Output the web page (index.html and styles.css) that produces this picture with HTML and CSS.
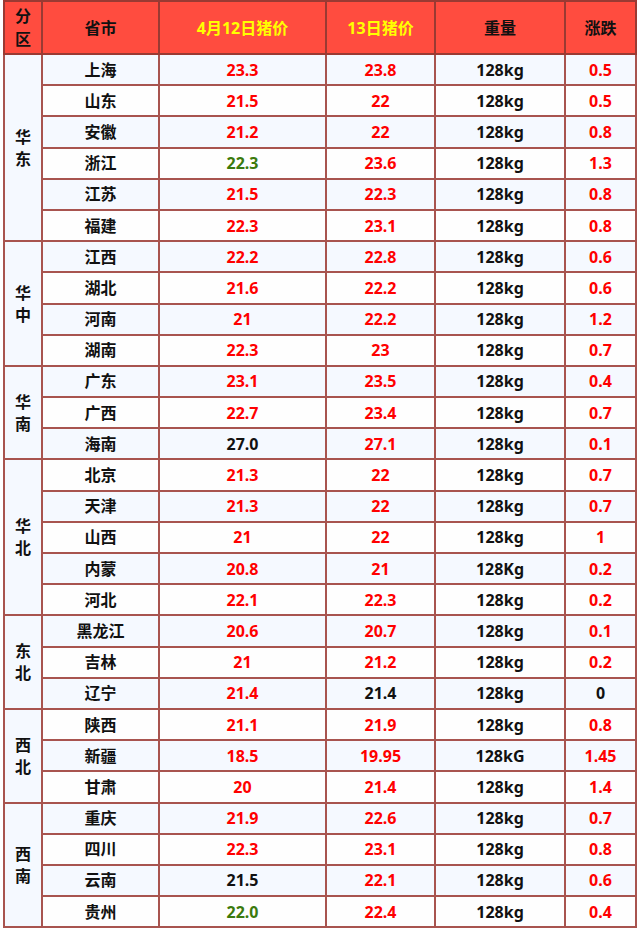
FILE: index.html
```html
<!DOCTYPE html>
<html lang="zh-CN">
<head>
<meta charset="utf-8">
<link rel="stylesheet" href="styles.css">
</head>
<body>
<table class="price">
<colgroup>
<col class="c-reg"><col class="c-prov"><col class="c-p12"><col class="c-p13"><col class="c-w"><col class="c-chg">
</colgroup>
<thead>
<tr class="head">
<th class="reg">分<br>区</th><th>省市</th><th class="yel">4月12日猪价</th><th class="yel">13日猪价</th><th>重量</th><th>涨跌</th>
</tr>
</thead>
<tbody>
<tr class="odd"><td class="reg" rowspan="6">华<br>东</td><td>上海</td><td class="r">23.3</td><td class="r">23.8</td><td>128kg</td><td class="r">0.5</td></tr>
<tr><td>山东</td><td class="r">21.5</td><td class="r">22</td><td>128kg</td><td class="r">0.5</td></tr>
<tr class="odd"><td>安徽</td><td class="r">21.2</td><td class="r">22</td><td>128kg</td><td class="r">0.8</td></tr>
<tr><td>浙江</td><td class="g">22.3</td><td class="r">23.6</td><td>128kg</td><td class="r">1.3</td></tr>
<tr class="odd"><td>江苏</td><td class="r">21.5</td><td class="r">22.3</td><td>128kg</td><td class="r">0.8</td></tr>
<tr><td>福建</td><td class="r">22.3</td><td class="r">23.1</td><td>128kg</td><td class="r">0.8</td></tr>

<tr class="odd"><td class="reg" rowspan="4">华<br>中</td><td>江西</td><td class="r">22.2</td><td class="r">22.8</td><td>128kg</td><td class="r">0.6</td></tr>
<tr><td>湖北</td><td class="r">21.6</td><td class="r">22.2</td><td>128kg</td><td class="r">0.6</td></tr>
<tr class="odd"><td>河南</td><td class="r">21</td><td class="r">22.2</td><td>128kg</td><td class="r">1.2</td></tr>
<tr><td>湖南</td><td class="r">22.3</td><td class="r">23</td><td>128kg</td><td class="r">0.7</td></tr>

<tr class="odd"><td class="reg" rowspan="3">华<br>南</td><td>广东</td><td class="r">23.1</td><td class="r">23.5</td><td>128kg</td><td class="r">0.4</td></tr>
<tr><td>广西</td><td class="r">22.7</td><td class="r">23.4</td><td>128kg</td><td class="r">0.7</td></tr>
<tr class="odd"><td>海南</td><td>27.0</td><td class="r">27.1</td><td>128kg</td><td class="r">0.1</td></tr>

<tr><td class="reg" rowspan="5">华<br>北</td><td>北京</td><td class="r">21.3</td><td class="r">22</td><td>128kg</td><td class="r">0.7</td></tr>
<tr class="odd"><td>天津</td><td class="r">21.3</td><td class="r">22</td><td>128kg</td><td class="r">0.7</td></tr>
<tr><td>山西</td><td class="r">21</td><td class="r">22</td><td>128kg</td><td class="r">1</td></tr>
<tr class="odd"><td>内蒙</td><td class="r">20.8</td><td class="r">21</td><td>128Kg</td><td class="r">0.2</td></tr>
<tr><td>河北</td><td class="r">22.1</td><td class="r">22.3</td><td>128kg</td><td class="r">0.2</td></tr>

<tr class="odd"><td class="reg" rowspan="3">东<br>北</td><td>黑龙江</td><td class="r">20.6</td><td class="r">20.7</td><td>128kg</td><td class="r">0.1</td></tr>
<tr><td>吉林</td><td class="r">21</td><td class="r">21.2</td><td>128kg</td><td class="r">0.2</td></tr>
<tr class="odd"><td>辽宁</td><td class="r">21.4</td><td>21.4</td><td>128kg</td><td>0</td></tr>

<tr><td class="reg" rowspan="3">西<br>北</td><td>陕西</td><td class="r">21.1</td><td class="r">21.9</td><td>128kg</td><td class="r">0.8</td></tr>
<tr class="odd"><td>新疆</td><td class="r">18.5</td><td class="r">19.95</td><td>128kG</td><td class="r">1.45</td></tr>
<tr><td>甘肃</td><td class="r">20</td><td class="r">21.4</td><td>128kg</td><td class="r">1.4</td></tr>

<tr class="odd"><td class="reg" rowspan="4">西<br>南</td><td>重庆</td><td class="r">21.9</td><td class="r">22.6</td><td>128kg</td><td class="r">0.7</td></tr>
<tr><td>四川</td><td class="r">22.3</td><td class="r">23.1</td><td>128kg</td><td class="r">0.8</td></tr>
<tr class="odd"><td>云南</td><td>21.5</td><td class="r">22.1</td><td>128kg</td><td class="r">0.6</td></tr>
<tr><td>贵州</td><td class="g">22.0</td><td class="r">22.4</td><td>128kg</td><td class="r">0.4</td></tr>
</tbody>
</table>
</body>
</html>
```
FILE: styles.css
```css
html, body {
  margin: 0;
  padding: 0;
  background: #ffffff;
}
body {
  padding: 0 0 0 3px;
  font-family: "Noto Sans", "Noto Sans CJK SC", sans-serif;
  font-weight: bold;
  font-size: 16px;
  color: #111111;
}
.price {
  border-collapse: collapse;
  table-layout: fixed;
  width: 632px;
  border: 2px solid #a0443f;
}
.c-reg { width: 38px; }
.c-prov { width: 117px; }
.c-p12 { width: 167px; }
.c-p13 { width: 109px; }
.c-w { width: 130px; }
.c-chg { width: 71px; }

.price th,
.price td {
  border: 2px solid #a8544f;
  padding: 0;
  text-align: center;
  vertical-align: middle;
  line-height: 20px;
}
.price th {
  background: #ff4c3f;
  color: #111111;
  font-weight: bold;
  border-color: #9a3a33;
}
.head { height: 53px; }
.price th.yel { color: #ffff00; }
.price th.reg { line-height: 23px; }
.price tbody tr { height: 31.2px; background: #fefefe; }
.price tbody tr.odd { background: #f5f9ff; }
.price td.reg {
  background: #f5f9ff;
  line-height: 22px;
}
.r { color: #ff0000; }
.g { color: #3b7a0d; }
```
